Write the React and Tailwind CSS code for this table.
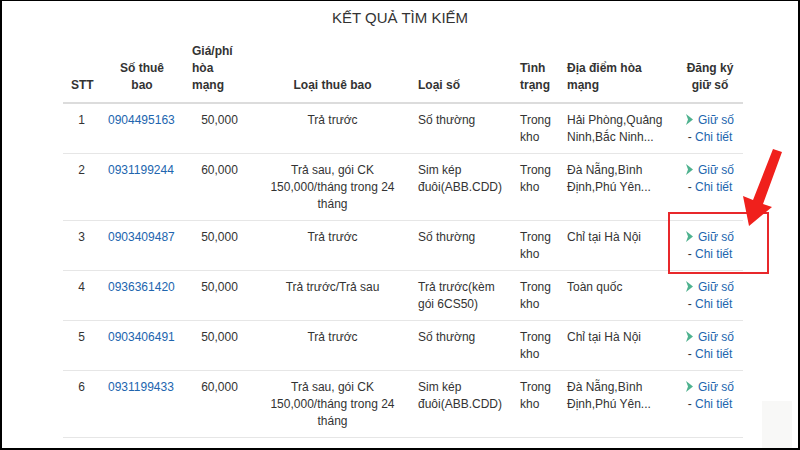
const rows = [
  { stt: 1, so: "0904495163", gia: "50,000", loai: ["Trả trước"], loaiSo: ["Số thường"], diaDiem: ["Hải Phòng,Quảng", "Ninh,Bắc Ninh..."] },
  { stt: 2, so: "0931199244", gia: "60,000", loai: ["Trả sau, gói CK", "150,000/tháng trong 24", "tháng"], loaiSo: ["Sim kép", "đuôi(ABB.CDD)"], diaDiem: ["Đà Nẵng,Bình", "Định,Phú Yên..."] },
  { stt: 3, so: "0903409487", gia: "50,000", loai: ["Trả trước"], loaiSo: ["Số thường"], diaDiem: ["Chỉ tại Hà Nội"] },
  { stt: 4, so: "0936361420", gia: "50,000", loai: ["Trả trước/Trả sau"], loaiSo: ["Trả trước(kèm", "gói 6CS50)"], diaDiem: ["Toàn quốc"] },
  { stt: 5, so: "0903406491", gia: "50,000", loai: ["Trả trước"], loaiSo: ["Số thường"], diaDiem: ["Chỉ tại Hà Nội"] },
  { stt: 6, so: "0931199433", gia: "60,000", loai: ["Trả sau, gói CK", "150,000/tháng trong 24", "tháng"], loaiSo: ["Sim kép", "đuôi(ABB.CDD)"], diaDiem: ["Đà Nẵng,Bình", "Định,Phú Yên..."] },
  { stt: 7, so: "0904154891", gia: "50,000", loai: ["Trả trước"], loaiSo: ["Số thường"], diaDiem: ["Hải Phòng,Quảng", "Ninh,Bắc Ninh..."] },
];

const Lines = ({ items }) =>
  items.map((t, i) => (
    <span key={i} className="block whitespace-nowrap">
      {t}
    </span>
  ));

const Chevron = () => (
  <svg width="7" height="11" viewBox="0 0 7 11" className="inline-block mr-[5px] -mt-[2px] align-middle">
    <polygon points="0,0 7,5.5 0,11 2,5.5" fill="#4fb28f" />
  </svg>
);

const App = () => {
  return (
    <div
      className="relative w-[800px] h-[450px] overflow-hidden bg-white border-t border-l-2 border-r-2 border-b-2 border-black text-[12px] leading-[17px] text-[#333]"
      style={{ fontFamily: '"Liberation Sans", Arial, sans-serif' }}
    >
      <div className="h-[33px] flex items-center justify-center text-[15px] text-[#333]">
        KẾT QUẢ TÌM KIẾM
      </div>
      <table className="mt-[9px] ml-[61px] w-[680px] table-fixed border-collapse">
        <colgroup>
          <col className="w-[37px]" />
          <col className="w-[84px]" />
          <col className="w-[71px]" />
          <col className="w-[155px]" />
          <col className="w-[102px]" />
          <col className="w-[47px]" />
          <col className="w-[118px]" />
          <col className="w-[66px]" />
        </colgroup>
        <thead>
          <tr className="border-b-2 border-[#dcdcdc] font-bold align-bottom">
            <th className="px-2 pb-2 text-center">STT</th>
            <th className="px-2 pb-2 text-center">Số thuê<br />bao</th>
            <th className="px-2 pb-2 text-left">Giá/phí<br />hòa<br />mạng</th>
            <th className="px-2 pb-2 text-center">Loại thuê bao</th>
            <th className="px-2 pb-2 text-left">Loại số</th>
            <th className="pl-2 pr-0 pb-2 text-left">Tình<br />trạng</th>
            <th className="px-2 pb-2 text-left">Địa điểm hòa<br />mạng</th>
            <th className="px-1 pb-2 text-center">Đăng ký<br />giữ số</th>
          </tr>
        </thead>
        <tbody>
          {rows.map((r) => (
            <tr key={r.stt} className="border-b border-[#e6e6e6] align-top">
              <td className="px-2 pt-2 pb-[7px] text-center">{r.stt}</td>
              <td className="px-2 pt-2 pb-[7px] text-[#2165ae]">{r.so}</td>
              <td className="px-2 pt-2 pb-[7px] text-center">{r.gia}</td>
              <td className="px-2 pt-2 pb-[7px] text-center"><Lines items={r.loai} /></td>
              <td className="px-2 pt-2 pb-[7px]"><Lines items={r.loaiSo} /></td>
              <td className="pl-2 pr-0 pt-2 pb-[7px]">Trong<br />kho</td>
              <td className="px-2 pt-2 pb-[7px]"><Lines items={r.diaDiem} /></td>
              <td className="px-1 pt-2 pb-[7px] text-center text-[#2165ae] whitespace-nowrap">
                <span className="block"><Chevron />Giữ số</span>
                <span className="block"><span className="text-[#333]">- </span>Chi tiết</span>
              </td>
            </tr>
          ))}
        </tbody>
      </table>

      <div className="absolute left-[666px] top-[211px] w-[101px] h-[62px] border-2 border-[#e8282b]" />
      <svg className="absolute left-[735px] top-[140px]" width="60" height="95" viewBox="0 0 60 95">
        <polygon points="36,8 45,11 26,63 35,66 12,85 6,55 16,59" fill="#f0201c" />
      </svg>
      <div className="absolute left-[760px] top-[400px] w-[30px] h-[48px] bg-[#f8f8f7]" />
    </div>
  );
};

export default App;
